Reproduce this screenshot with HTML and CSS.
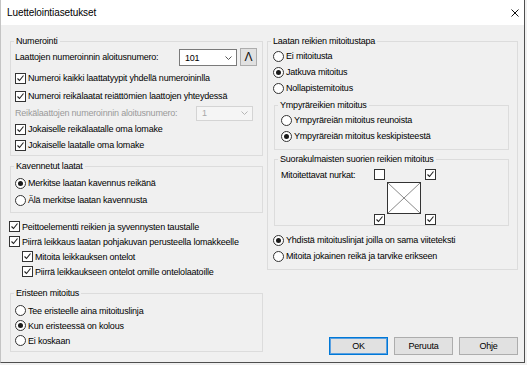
FILE: index.html
```html
<!DOCTYPE html>
<html lang="fi">
<head>
<meta charset="utf-8">
<title>Luettelointiasetukset</title>
<link rel="stylesheet" href="styles.css">
</head>
<body>
<div class="window">
  <div class="titlebar">
    <span class="title">Luettelointiasetukset</span>
    <svg class="close" width="8" height="8" viewBox="0 0 8 8"><path d="M0.5 0.5 L7.5 7.5 M7.5 0.5 L0.5 7.5" stroke="#111" stroke-width="1"/></svg>
  </div>
  <div class="content">
    <div class="col col-left">
      <fieldset class="group">
        <legend>Numerointi</legend>
        <div class="gbody g-num">
          <div class="row row-start">
            <span>Laattojen numeroinnin aloitusnumero:</span>
            <div class="start-controls">
              <div class="combo"><span>101</span><svg class="chev" width="7" height="4" viewBox="0 0 7 4"><path d="M0.5 0.5 L3.5 3.5 L6.5 0.5" fill="none" stroke="#555" stroke-width="1"/></svg></div>
              <button class="lambda">Λ</button>
            </div>
          </div>
          <div class="row h16 mt4"><span class="cb"><svg width="9" height="9" viewBox="0 0 9 9"><path d="M1.5 4.5 L3.5 6.5 L7.5 1.5" fill="none" stroke="#222" stroke-width="1.1"/></svg></span>Numeroi kaikki laattatyypit yhdellä numeroininlla</div>
          <div class="row h16 mt2"><span class="cb"><svg width="9" height="9" viewBox="0 0 9 9"><path d="M1.5 4.5 L3.5 6.5 L7.5 1.5" fill="none" stroke="#222" stroke-width="1.1"/></svg></span>Numeroi reikälaatat reiättömien laattojen yhteydessä</div>
          <div class="row h16 mt1 row-disabled">
            <span>Reikälaattojen numeroinnin aloitusnumero:</span>
            <div class="combo combo-dis"><span>1</span><svg class="chev" width="7" height="4" viewBox="0 0 7 4"><path d="M0.5 0.5 L3.5 3.5 L6.5 0.5" fill="none" stroke="#b5b5b5" stroke-width="1"/></svg></div>
          </div>
          <div class="row h16"><span class="cb"><svg width="9" height="9" viewBox="0 0 9 9"><path d="M1.5 4.5 L3.5 6.5 L7.5 1.5" fill="none" stroke="#222" stroke-width="1.1"/></svg></span>Jokaiselle reikälaatalle oma lomake</div>
          <div class="row h16"><span class="cb"><svg width="9" height="9" viewBox="0 0 9 9"><path d="M1.5 4.5 L3.5 6.5 L7.5 1.5" fill="none" stroke="#222" stroke-width="1.1"/></svg></span>Jokaiselle laatalle oma lomake</div>
        </div>
      </fieldset>

      <fieldset class="group mt3">
        <legend>Kavennetut laatat</legend>
        <div class="gbody g-kav">
          <div class="row h16 mt2"><span class="rb on"></span>Merkitse laatan kavennus reikänä</div>
          <div class="row h16 mt1"><span class="rb"></span>Älä merkitse laatan kavennusta</div>
        </div>
      </fieldset>

      <div class="loose">
        <div class="row h15 out"><span class="cb"><svg width="9" height="9" viewBox="0 0 9 9"><path d="M1.5 4.5 L3.5 6.5 L7.5 1.5" fill="none" stroke="#222" stroke-width="1.1"/></svg></span>Peittoelementti reikien ja syvennysten taustalle</div>
        <div class="row h15 out"><span class="cb"><svg width="9" height="9" viewBox="0 0 9 9"><path d="M1.5 4.5 L3.5 6.5 L7.5 1.5" fill="none" stroke="#222" stroke-width="1.1"/></svg></span>Piirrä leikkaus laatan pohjakuvan perusteella lomakkeelle</div>
        <div class="row h15 indent"><span class="cb"><svg width="9" height="9" viewBox="0 0 9 9"><path d="M1.5 4.5 L3.5 6.5 L7.5 1.5" fill="none" stroke="#222" stroke-width="1.1"/></svg></span>Mitoita leikkauksen ontelot</div>
        <div class="row h15 indent"><span class="cb"><svg width="9" height="9" viewBox="0 0 9 9"><path d="M1.5 4.5 L3.5 6.5 L7.5 1.5" fill="none" stroke="#222" stroke-width="1.1"/></svg></span>Piirrä leikkaukseen ontelot omille ontelolaatoille</div>
      </div>

      <fieldset class="group mt7">
        <legend>Eristeen mitoitus</legend>
        <div class="gbody g-eri">
          <div class="row h15"><span class="rb"></span>Tee eristeelle aina mitoituslinja</div>
          <div class="row h15"><span class="rb on"></span>Kun eristeessä on kolous</div>
          <div class="row h15"><span class="rb"></span>Ei koskaan</div>
        </div>
      </fieldset>
    </div>

    <div class="col col-right">
      <fieldset class="group">
        <legend>Laatan reikien mitoitustapa</legend>
        <div class="gbody g-mit">
          <div class="row h16"><span class="rb"></span>Ei mitoitusta</div>
          <div class="row h16"><span class="rb on"></span>Jatkuva mitoitus</div>
          <div class="row h16"><span class="rb"></span>Nollapistemitoitus</div>

          <fieldset class="group sub mt2">
            <legend>Ympyräreikien mitoitus</legend>
            <div class="gbody g-ymp">
              <div class="row h16"><span class="rb"></span>Ympyräreiän mitoitus reunoista</div>
              <div class="row h16"><span class="rb on"></span>Ympyräreiän mitoitus keskipisteestä</div>
            </div>
          </fieldset>

          <fieldset class="group sub mt2">
            <legend>Suorakulmaisten suorien reikien mitoitus</legend>
            <div class="gbody g-suo">
              <span class="corner-label">Mitoitettavat nurkat:</span>
              <div class="corners">
                <span class="cb c-tl"></span>
                <span class="cb c-tr"><svg width="9" height="9" viewBox="0 0 9 9"><path d="M1.5 4.5 L3.5 6.5 L7.5 1.5" fill="none" stroke="#222" stroke-width="1.1"/></svg></span>
                <svg class="c-sq" width="34" height="32" viewBox="0 0 34 32"><rect x="0.5" y="0.5" width="33" height="31" fill="#fff" stroke="#333"/><path d="M1 1 L33 31 M33 1 L1 31" stroke="#8a8a8a" stroke-width="1"/></svg>
                <span class="cb c-bl"><svg width="9" height="9" viewBox="0 0 9 9"><path d="M1.5 4.5 L3.5 6.5 L7.5 1.5" fill="none" stroke="#222" stroke-width="1.1"/></svg></span>
                <span class="cb c-br"><svg width="9" height="9" viewBox="0 0 9 9"><path d="M1.5 4.5 L3.5 6.5 L7.5 1.5" fill="none" stroke="#222" stroke-width="1.1"/></svg></span>
              </div>
            </div>
          </fieldset>

          <div class="row h16 mt6"><span class="rb on"></span>Yhdistä mitoituslinjat joilla on sama viiteteksti</div>
          <div class="row h16"><span class="rb"></span>Mitoita jokainen reikä ja tarvike erikseen</div>
        </div>
      </fieldset>

      <div class="buttons">
        <button class="btn btn-default">OK</button>
        <button class="btn">Peruuta</button>
        <button class="btn">Ohje</button>
      </div>
    </div>
  </div>
</div>
</body>
</html>
```

FILE: styles.css
```css
* { box-sizing: border-box; }

html, body {
  margin: 0;
  background: #f0f0f0;
}

body {
  font-family: "Liberation Sans", Arial, sans-serif;
  font-size: 9px;
  letter-spacing: -0.2px;
  color: #000;
}

.window {
  width: 525px;
  height: 363px;
  background: #f0f0f0;
  border-left: 1px solid #c4c4c4;
  border-right: 1px solid #4e4e4e;
  border-bottom: 1px solid #4e4e4e;
  display: flex;
  flex-direction: column;
}

.titlebar {
  height: 25px;
  flex: none;
  background: #fff;
  display: flex;
  align-items: center;
  padding-left: 6px;
}

.title {
  font-size: 10px;
  letter-spacing: -0.1px;
  line-height: 14px;
}

.close {
  margin-left: auto;
  margin-right: 5px;
}

.content {
  flex: 1;
  display: grid;
  grid-template-columns: 253px 251px;
  column-gap: 4px;
  padding: 9px 0 7px 9px;
  min-height: 0;
}

.col {
  display: flex;
  flex-direction: column;
  min-width: 0;
}

.group {
  margin: 0;
  padding: 0;
  border: 1px solid #dcdcdc;
  min-width: 0;
}

.group legend {
  margin-left: 3px;
  padding: 0 2px;
  height: 14px;
  line-height: 14px;
}

.gbody {
  display: flex;
  flex-direction: column;
}

.g-num { padding: 0 5px 2px 4px; }
.g-kav { padding: 0 5px 4px 4px; }
.g-eri { padding: 3px 5px 3px 4px; }
.g-mit { padding: 0 0 5px 5px; }
.g-ymp { padding: 0 0 5px 6px; }
.g-suo {
  flex-direction: row;
  align-items: flex-start;
  padding: 0 0 0 6px;
}

.sub {
  width: 235px;
  margin-left: 1px;
}

.row {
  display: flex;
  align-items: center;
  white-space: nowrap;
}

.h15 { height: 15px; }
.h16 { height: 16px; }
.mt1 { margin-top: 1px; }
.mt2 { margin-top: 2px; }
.mt3 { margin-top: 3px; }
.mt4 { margin-top: 4px; }
.mt6 { margin-top: 6px; }
.mt7 { margin-top: 7px; }

.row-start {
  height: 18px;
  justify-content: space-between;
}

.start-controls {
  display: flex;
  align-items: flex-start;
  height: 18px;
}

.combo {
  width: 58px;
  height: 17px;
  margin-top: 1px;
  border: 1px solid #7a7a7a;
  background: #fff;
  display: flex;
  align-items: center;
  justify-content: space-between;
  padding: 0 4px 0 5px;
}

.lambda {
  width: 17px;
  height: 18px;
  margin-left: 3px;
  padding: 0;
  border: 1px solid #adadad;
  background: #e1e1e1;
  font-family: "Liberation Sans", Arial, sans-serif;
  font-size: 12px;
  line-height: 16px;
  color: #111;
}

.row-disabled {
  justify-content: space-between;
  color: #9a9a9a;
}

.combo-dis {
  width: 57px;
  height: 15px;
  margin: 0 4px 0 0;
  border: 1px solid #d4d4d4;
  background: #f5f5f5;
  color: #a8a8a8;
}

.cb {
  flex: none;
  width: 11px;
  height: 11px;
  border: 1px solid #333;
  background: #fff;
  display: flex;
  align-items: center;
  justify-content: center;
  margin-right: 2px;
}

.cb svg { display: block; }

.rb {
  flex: none;
  width: 11px;
  height: 11px;
  border: 1px solid #333;
  border-radius: 50%;
  background: #fff;
  display: flex;
  align-items: center;
  justify-content: center;
  margin-right: 2px;
}

.rb.on::after {
  content: "";
  width: 5px;
  height: 5px;
  border-radius: 50%;
  background: #1a1a1a;
}

.loose {
  margin-top: 6px;
  display: flex;
  flex-direction: column;
}

.out { margin-left: -1px; }
.indent { margin-left: 12px; }

.corner-label {
  width: 93px;
  margin-top: 2px;
  line-height: 14px;
}

.corners {
  margin-top: 3px;
  display: grid;
  grid-template-columns: 11px 2px 34px 4px 11px;
  grid-template-rows: 11px 2px 32px 11px;
}

.corners .cb { margin: 0; }
.c-tl { grid-column: 1; grid-row: 1; }
.c-tr { grid-column: 5; grid-row: 1; }
.c-sq { grid-column: 3; grid-row: 3; display: block; }
.c-bl { grid-column: 1; grid-row: 4; }
.c-br { grid-column: 5; grid-row: 4; }

.buttons {
  margin-top: auto;
  display: flex;
  justify-content: flex-end;
  gap: 6px;
}

.btn {
  width: 59px;
  height: 18px;
  padding: 0;
  border: 1px solid #adadad;
  background: #e1e1e1;
  font-family: "Liberation Sans", Arial, sans-serif;
  font-size: 9px;
  letter-spacing: -0.2px;
  color: #000;
}

.btn-default {
  border-color: #0078d7;
  box-shadow: inset 0 0 0 1px #5aa0e0;
}
```
